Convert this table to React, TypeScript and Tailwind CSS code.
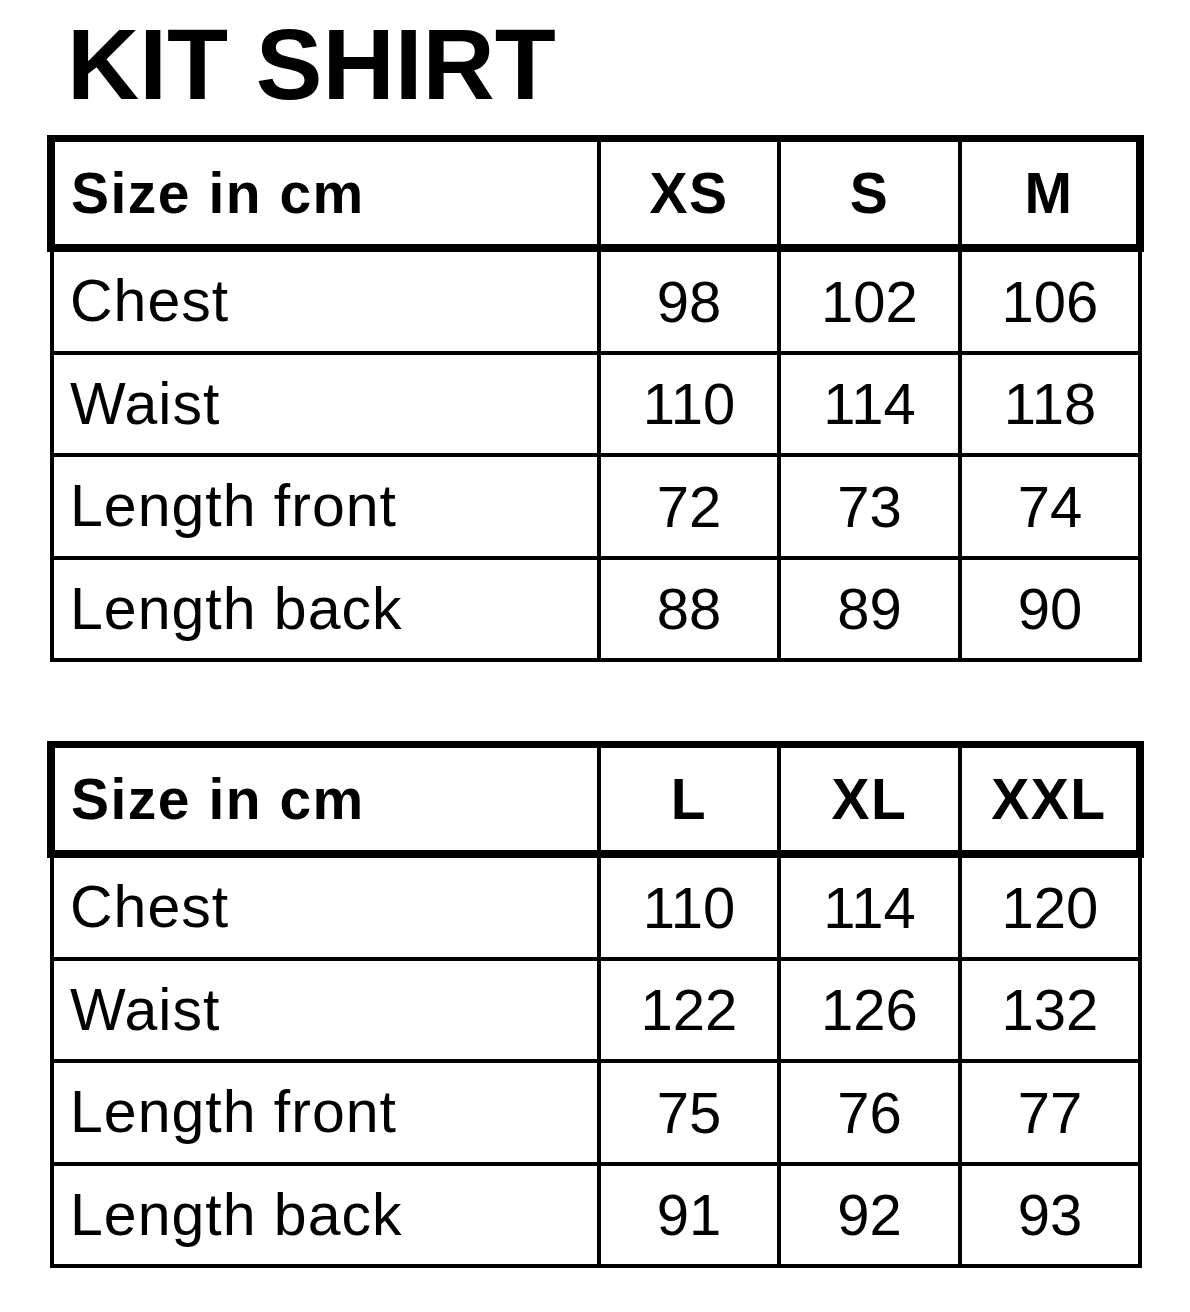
const tables = [
  {
    sizes: ['XS', 'S', 'M'],
    rows: [
      { label: 'Chest', values: ['98', '102', '106'] },
      { label: 'Waist', values: ['110', '114', '118'] },
      { label: 'Length front', values: ['72', '73', '74'] },
      { label: 'Length back', values: ['88', '89', '90'] }
    ]
  },
  {
    sizes: ['L', 'XL', 'XXL'],
    rows: [
      { label: 'Chest', values: ['110', '114', '120'] },
      { label: 'Waist', values: ['122', '126', '132'] },
      { label: 'Length front', values: ['75', '76', '77'] },
      { label: 'Length back', values: ['91', '92', '93'] }
    ]
  }
];

// row heights alternate so four rows fill 410px
const rowHeights = ['h-[103px]', 'h-[102px]', 'h-[103px]', 'h-[102px]'];

function SizeTable({ sizes, rows }: { sizes: string[]; rows: { label: string; values: string[] }[] }) {
  return (
    <div className="w-[1097px]">
      {/* Header */}
      <div className="flex h-[117px] border-[8px] border-t-[7px] border-black font-bold text-[57px] leading-none tracking-[1.5px]">
        <div className="w-[546px] border-r-4 border-black flex items-center pl-4">Size in cm</div>
        <div className="w-[180px] border-r-4 border-black flex items-center justify-center">{sizes[0]}</div>
        <div className="w-[181px] border-r-4 border-black flex items-center justify-center">{sizes[1]}</div>
        <div className="flex-1 flex items-center justify-center">{sizes[2]}</div>
      </div>

      {/* Body */}
      <div className="ml-[3px] w-[1092px] border-x-4 border-black text-[58px] leading-none">
        {rows.map((row, i) => (
          <div key={row.label} className={`flex ${rowHeights[i]} border-b-4 border-black`}>
            <div className="w-[547px] border-r-4 border-black flex items-center pl-4 text-[59px] tracking-[1px]">{row.label}</div>
            <div className="w-[180px] border-r-4 border-black flex items-center justify-center">{row.values[0]}</div>
            <div className="w-[181px] border-r-4 border-black flex items-center justify-center">{row.values[1]}</div>
            <div className="flex-1 flex items-center justify-center">{row.values[2]}</div>
          </div>
        ))}
      </div>
    </div>
  );
}

export default function App() {
  return (
    <div className="w-[1190px] h-[1312px] bg-white text-black font-['Liberation_Sans',Arial,sans-serif] pt-[14px] pl-[47px]">
      <h1 className="h-[100px] pl-[20px] text-[100px] font-bold leading-none">KIT SHIRT</h1>
      <div className="mt-[21px] flex flex-col gap-[79px]">
        {tables.map((t) => (
          <SizeTable key={t.sizes[0]} sizes={t.sizes} rows={t.rows} />
        ))}
      </div>
    </div>
  );
}
